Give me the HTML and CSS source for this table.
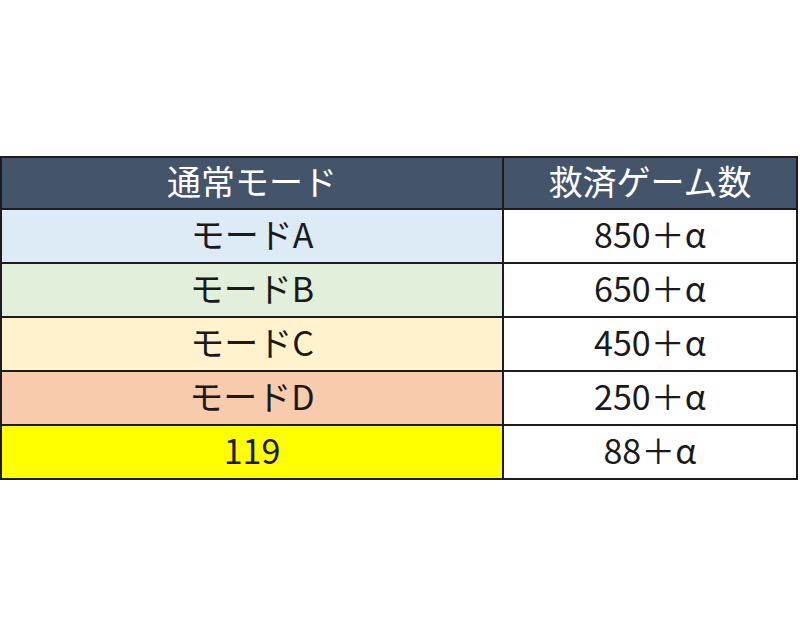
FILE: index.html
```html
<!DOCTYPE html>
<html lang="ja">
<head>
<meta charset="utf-8">
<link rel="stylesheet" href="styles.css">
</head>
<body>
<div class="page">
<table class="tbl">
<thead>
<tr><th class="c1">通常モード</th><th class="c2">救済ゲーム数</th></tr>
</thead>
<tbody>
<tr><td class="c1 a">モードA</td><td class="c2">850＋α</td></tr>
<tr><td class="c1 b">モードB</td><td class="c2">650＋α</td></tr>
<tr><td class="c1 c">モードC</td><td class="c2">450＋α</td></tr>
<tr><td class="c1 d">モードD</td><td class="c2">250＋α</td></tr>
<tr><td class="c1 e">119</td><td class="c2">88＋α</td></tr>
</tbody>
</table>
</div>
</body>
</html>
```
FILE: styles.css
```css
html, body { margin: 0; padding: 0; background: #fff; }
.page { padding-top: 156px; }
.tbl {
  border-collapse: collapse;
  width: 798px;
  table-layout: fixed;
  font-family: "Noto Sans CJK JP", "Noto Sans", sans-serif;
  font-size: 34px;
  color: #1a1a1a;
}
.tbl th, .tbl td {
  border: 2px solid #1c1c1c;
  text-align: center;
  padding: 0 0 5px 0;
  line-height: 1;
}
.tbl th { height: 45px; background: #44546a; color: #fff; font-weight: normal; }
.tbl td { height: 47px; background: #fff; }
.tbl .c1 { width: 500px; }
.tbl td.a { background: #ddebf7; }
.tbl td.b { background: #e2efda; }
.tbl td.c { background: #fff2cc; }
.tbl td.d { background: #f8cbad; }
.tbl td.e { background: #ffff00; }
```
